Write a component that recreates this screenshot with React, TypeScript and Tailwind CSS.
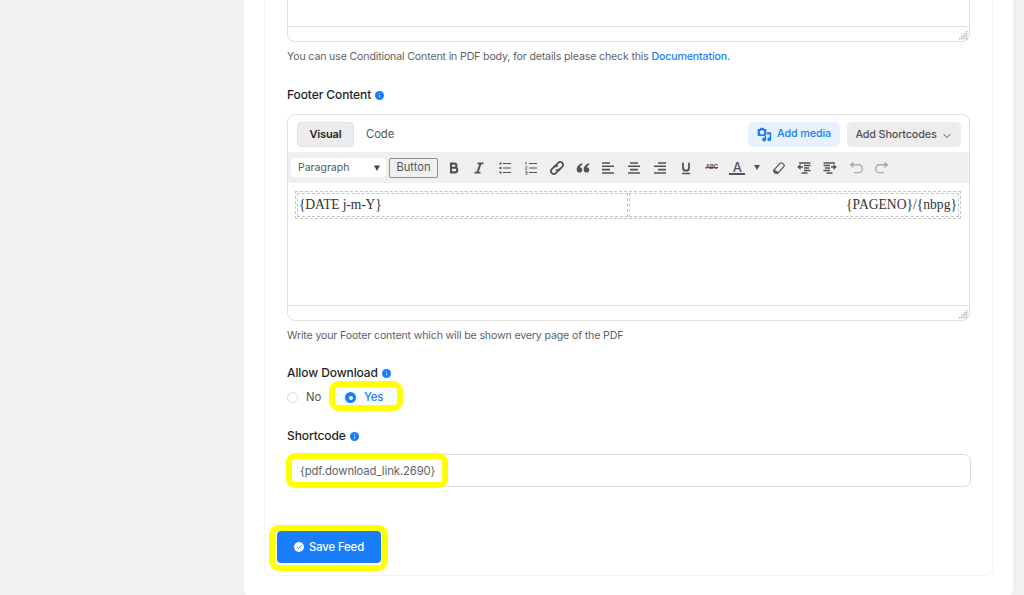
import type { ReactNode } from 'react';
import { ChevronDown } from 'lucide-react';

interface ChildrenProps {
  children: ReactNode;
}

const InfoDot = () => (
  <svg className="w-[9px] h-[9px]" viewBox="0 0 10 10">
    <circle cx="5" cy="5" r="5" fill="#1a7efb" />
    <path d="M5 4.3v3M5 2.4v1" stroke="#b9d8ff" strokeWidth="1" />
  </svg>
);

const FieldLabel = ({ children }: ChildrenProps) => (
  <div className="flex items-center gap-1 h-4 text-[12px] tracking-[-0.1px] font-medium text-[#1e1f21] whitespace-nowrap">
    {children}
    <InfoDot />
  </div>
);

const Grip = () => (
  <svg className="w-[9px] h-[9px]" viewBox="0 0 10 10" fill="#999">
    {[0, 1, 2, 3, 4].map((row) =>
      Array.from({ length: row + 1 }, (_, i) => (
        <rect key={`${row}-${i}`} x={8 - i * 2} y={row * 2} width="1.2" height="1.2" />
      ))
    )}
  </svg>
);

const StatusBar = () => (
  <div className="flex h-[15px] items-center justify-end border-t border-[#e0e0e0] pr-px pt-0.5">
    <Grip />
  </div>
);

interface ToolProps extends ChildrenProps {
  muted?: boolean;
}

const Tool = ({ children, muted = false }: ToolProps) => (
  <span
    className={`flex w-[25.8px] shrink-0 justify-center ${
      muted ? 'text-[#a9abac]' : 'text-[#505356]'
    }`}
  >
    <svg
      className="h-4 w-4"
      viewBox="0 0 16 16"
      fill="none"
      stroke="currentColor"
      strokeWidth="1.6"
    >
      {children}
    </svg>
  </span>
);

const EditorToolbar = () => (
  <div className="flex h-[31px] items-center bg-[#f0f0f0] pl-[3px]">
    <div className="flex h-[19px] w-[95px] items-center justify-between rounded-sm bg-white pl-[7px] pr-1.5 text-[10.5px] text-[#50575e]">
      Paragraph
      <svg className="h-1.5 w-1.5" viewBox="0 0 6 6" fill="#444">
        <path d="M0 .5h6L3 6z" />
      </svg>
    </div>
    <div className="ml-[3px] mr-[2.8px] flex h-5 w-[49px] items-center justify-center rounded-[2px] border border-[#8c8f94] text-[11.2px] text-[#50575e]">
      Button
    </div>

    {/* Bold, italic, lists */}
    <Tool>
      <path d="M5 3.6h3.4a2.1 2.1 0 0 1 0 4.2H5zM5 7.8h4a2.3 2.3 0 0 1 0 4.6H5z" strokeWidth="2.1" />
    </Tool>
    <Tool>
      <path d="M6.5 3.4h6M3.5 12.6h6M9.6 3.4l-3.2 9.2" strokeWidth="1.9" />
    </Tool>
    <Tool>
      <path d="M6 3.5h8M6 8h8M6 12.5h8" strokeWidth="1" />
      <path d="M2.5 3.5h2M2.5 8h2M2.5 12.5h2" strokeWidth="2" />
    </Tool>
    <Tool>
      <path d="M6 3.5h8M6 8h8M6 12.5h8" strokeWidth="1" />
      <path d="M3 2v3M2.3 2.5h1M2.2 6.7h1.8v1.2L2.3 9.3H4M2.2 11.3H4v3H2.2M2.5 12.8H4" strokeWidth=".7" />
    </Tool>
    <Tool>
      <g transform="rotate(-45 8 8)" strokeWidth="1.8">
        <path d="M9.5 10.8H3.5a2.8 2.8 0 0 1 0-5.6h3.5a2.8 2.8 0 0 1 2.6 2.4" />
        <path d="M6.5 5.2h6a2.8 2.8 0 0 1 0 5.6H9a2.8 2.8 0 0 1-2.6-2.4" />
      </g>
    </Tool>
    <Tool>
      <path
        d="M7.2 3.2C4.1 4 1.7 6.2 1.7 9.4c0 2 1.1 3.2 2.8 3.2 1.6 0 2.8-1.1 2.8-2.7 0-1.5-1-2.5-2.4-2.6.2-1.2 1-2 2.3-2.6zM14.2 3.2c-3.1.8-5.5 3-5.5 6.2 0 2 1.1 3.2 2.8 3.2 1.6 0 2.8-1.1 2.8-2.7 0-1.5-1-2.5-2.4-2.6.2-1.2 1-2 2.3-2.6z"
        fill="currentColor"
        stroke="none"
      />
    </Tool>

    {/* Alignment */}
    <Tool>
      <path d="M2 3h8M2 6.3h12M2 9.6h8M2 13h12" />
    </Tool>
    <Tool>
      <path d="M4 3h8M2 6.3h12M4 9.6h8M2 13h12" />
    </Tool>
    <Tool>
      <path d="M6 3h8M2 6.3h12M6 9.6h8M2 13h12" />
    </Tool>
    <Tool>
      <path d="M5 2.8v4.9a3 3 0 0 0 6 0V2.8" strokeWidth="1.8" />
      <path d="M4 13.5h8" strokeWidth="1.3" />
    </Tool>
    <span className="flex w-[25.8px] shrink-0 justify-center text-[6.3px] font-semibold tracking-[-0.3px] text-[#505356]">
      <span className="line-through">ABC</span>
    </span>
    <span className="flex w-[25.8px] shrink-0 justify-center">
      <span className="h-[15px] w-4 border-b-2 border-[#505356] text-center text-[13px] font-medium leading-[14px] text-[#505356]">
        A
      </span>
    </span>
    <span className="flex w-[15.4px] shrink-0 justify-center pr-0.5">
      <svg className="h-[5px] w-1.5" viewBox="0 0 6 5" fill="#505356">
        <path d="M0 0h6L3 5z" />
      </svg>
    </span>
    <Tool>
      <path d="M2.8 10.2L9.2 3.2Q10 2.4 11 3l1.8 1.4q1 .8.2 1.9L7 13q-.8.7-1.8.4Q2.6 12.8 2.8 10.2z" strokeWidth="1.2" />
      <path d="M3 9.8q.6 2 3.8 2.6" strokeWidth="1.8" />
    </Tool>
    <Tool>
      <path d="M3 3h11.5M8 5.5h6.5M8 8h5M8 10.5h6.5M5.5 13h6" strokeWidth="1.5" />
      <path d="M4 7h3" strokeWidth="1.5" />
      <path d="M1.2 7l3.4-3v6z" fill="currentColor" stroke="none" />
    </Tool>
    <Tool>
      <path d="M1.5 3H13M1.5 5.5H8M3 8h5M1.5 10.5H8M4.5 13h6" strokeWidth="1.5" />
      <path d="M9 7h3" strokeWidth="1.5" />
      <path d="M14.8 7l-3.4-3v6z" fill="currentColor" stroke="none" />
    </Tool>

    {/* History */}
    <Tool muted>
      <path d="M3.5 4.8h7a3.9 3.9 0 0 1 0 7.8H6" strokeWidth="1.4" />
      <path d="M1.5 4.8l4-3.2V8z" fill="currentColor" stroke="none" />
    </Tool>
    <Tool muted>
      <path d="M12.5 4.8h-7a3.9 3.9 0 0 0 0 7.8H10" strokeWidth="1.4" />
      <path d="M14.5 4.8l-4-3.2V8z" fill="currentColor" stroke="none" />
    </Tool>
  </div>
);

const MediaIcon = () => (
  <svg className="h-[15px] w-[15px]" viewBox="0 0 15 15" fill="#1a7efb">
    <path
      fillRule="evenodd"
      d="M1.6 2h1L3.4.8h3L7.2 2h1.2c.6 0 1 .4 1 1v4.3L7.8 9H1.6c-.6 0-1-.4-1-1V3c0-.6.4-1 1-1zM5 3.2a2.2 2.2 0 1 0 0 4.4 2.2 2.2 0 0 0 0-4.4z"
    />
    <path d="M10 5.3h4.2v6.9a1.9 1.9 0 1 1-1.5-1.8V7.5H10zM9.2 8.5v4a2 2 0 1 1-1.5-1.9V8.5z" />
  </svg>
);

const FooterEditor = () => (
  <div className="mt-[11px] flex h-[207px] w-[683px] flex-col overflow-hidden rounded-lg border border-[#e0e0e0] bg-white">
    <div className="flex h-[37px] items-center pl-[9px] pr-2 pt-px text-[11.3px] font-medium">
      <div className="flex h-[25px] w-[57px] items-center justify-center rounded-[4px] border border-[#e2e2e2] bg-[#ededed] text-[11px] font-semibold tracking-[-0.15px] text-[#1e1f21]">
        Visual
      </div>
      <div className="ml-3 font-normal tracking-[-0.1px] text-[#50575e]">Code</div>
      <div className="ml-auto flex h-[25px] w-[92px] items-center justify-center gap-[5px] rounded-[5px] bg-[#e8f2ff] text-[10.8px] tracking-[-0.15px] text-[#1a7efb] whitespace-nowrap">
        <MediaIcon />
        Add media
      </div>
      <div className="ml-[7px] mt-px flex h-[25px] w-[114px] items-center justify-center gap-1 rounded-[5px] bg-[#ececec] pt-0.5 text-[10.8px] tracking-[-0.15px] text-[#505356] whitespace-nowrap">
        Add Shortcodes
        <ChevronDown className="h-3 w-3" strokeWidth={2} />
      </div>
    </div>
    <EditorToolbar />
    <div className="flex-1 pl-[7px] pr-2 pt-2">
      <div className="flex gap-px border border-dashed border-[#c4c4c4] p-px font-['Liberation_Serif',serif] text-[13.6px] leading-[22px] text-[#333]">
        <div className="h-6 flex-1 border border-dashed border-[#c4c4c4] pl-px tracking-[-0.15px]">
          {'{DATE j-m-Y}'}
        </div>
        <div className="h-6 flex-1 border border-dashed border-[#c4c4c4] pr-px text-right">
          {'{PAGENO}/{nbpg}'}
        </div>
      </div>
    </div>
    <StatusBar />
  </div>
);

const DownloadOptions = () => (
  <div className="mt-[7px] flex h-4 items-center text-[11.3px]">
    <span className="mt-0.5 h-[11px] w-[11px] rounded-full border border-[#d9dbdf]" />
    <span className="ml-2 mt-[3px] w-[29px] text-[#505356]">No</span>
    {/* Highlighted choice */}
    <div className="-ml-[6px] flex h-[30px] w-[74px] shrink-0 items-center rounded-[10px] border-[6px] border-[#ffff00] bg-[#f8fbff] pl-[10px] pt-[3px] font-medium tracking-[-0.1px] text-[#1a7efb]">
      <span className="flex h-[11px] w-[11px] items-center justify-center rounded-full bg-[#1a7efb]">
        <span className="h-1 w-1 rounded-full bg-white" />
      </span>
      <span className="ml-2">Yes</span>
    </div>
  </div>
);

const SaveButton = () => (
  <div className="mt-[38px] -ml-[18px] h-[46px] w-[119px] rounded-[10px] border-[6px] border-[#ffff00] bg-white pl-[2px]">
    <button
      type="button"
      className="flex h-8 w-[104px] items-center justify-center gap-[5px] rounded-[4px] bg-[#1a7efb] text-[11.3px] tracking-[-0.1px] font-medium text-white whitespace-nowrap"
    >
      <svg className="h-[10px] w-[10px]" viewBox="0 0 10 10">
        <circle cx="5" cy="5" r="5" fill="#fff" />
        <path d="M2.8 5l1.6 1.6 2.8-3" fill="none" stroke="#1a7efb" strokeWidth="1" />
      </svg>
      Save Feed
    </button>
  </div>
);

export default function App() {
  return (
    <div className="h-[595px] overflow-hidden bg-[#f1f1f1] pl-[244px] font-['Inter',sans-serif]">
      <div className="h-[597px] w-[769px] rounded-b-lg bg-white px-5">
        <div className="h-[575.5px] w-[729px] rounded-b-md border border-t-0 border-[#f4f4f5] pl-[22px]">
          {/* Bottom of the PDF body editor */}
          <div className="flex h-[42px] w-[683px] flex-col justify-end rounded-b-lg border border-t-0 border-[#e0e0e0]">
            <StatusBar />
          </div>
          <p className="mt-[7px] h-4 text-[10.6px] tracking-[-0.15px] leading-4 text-[#606266] whitespace-nowrap">
            You can use Conditional Content in PDF body, for details please check this{' '}
            <a className="font-medium text-[#1a7efb]">Documentation</a>.
          </p>

          <div className="mt-[22px]">
            <FieldLabel>Footer Content</FieldLabel>
          </div>
          <FooterEditor />
          <p className="mt-[7px] h-4 text-[10.6px] tracking-[-0.15px] leading-4 text-[#606266] whitespace-nowrap">
            Write your Footer content which will be shown every page of the PDF
          </p>

          <div className="mt-[21px]">
            <FieldLabel>Allow Download</FieldLabel>
          </div>
          <DownloadOptions />

          <div className="mt-6">
            <FieldLabel>Shortcode</FieldLabel>
          </div>
          <div className="relative mt-[10px] flex h-[33px] w-[684px] items-center rounded-[7px] border border-[#dadbdd] pl-3 pt-px text-[11.3px] tracking-[-0.1px] text-[#606266]">
            {'{pdf.download_link.2690}'}
            <span className="absolute -left-[2px] -top-[2px] h-[35px] w-[162px] rounded-[9px] border-[6px] border-[#ffff00]" />
          </div>

          <SaveButton />
        </div>
      </div>
    </div>
  );
}
